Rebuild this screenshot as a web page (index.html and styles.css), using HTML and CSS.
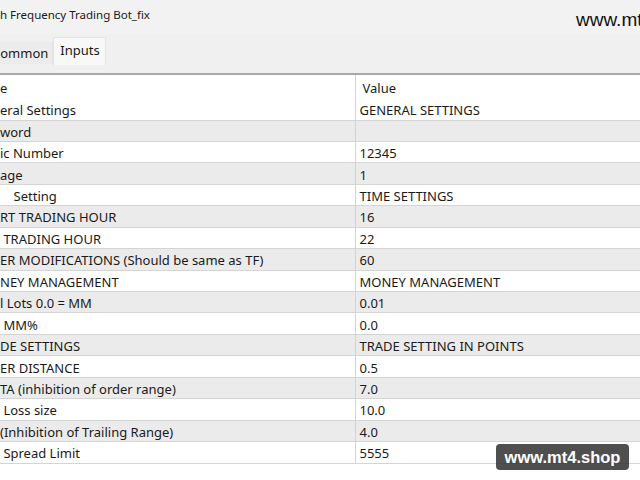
FILE: index.html
```html
<!DOCTYPE html>
<html lang="en">
<head>
    <meta charset="UTF-8">
    <meta name="viewport" content="width=device-width, initial-scale=1.0">
    <title>Inputs</title>
    <link rel="stylesheet" href="styles.css">
</head>
<body>

<div class="window">
    <div class="titlebar">
        <span class="title">h Frequency Trading Bot_fix</span>
        <span class="site">www.mt4.shop</span>
    </div>

    <div class="tabs">
        <div class="tab">Common</div>
        <div class="tab active">Inputs</div>
    </div>

    <table class="inputs">
        <thead>
            <tr><th>e</th><th>Value</th></tr>
        </thead>
        <tbody>
            <tr class="plain"><td>eral Settings</td><td>GENERAL SETTINGS</td></tr>
            <tr><td>word</td><td></td></tr>
            <tr><td>ic Number</td><td>12345</td></tr>
            <tr><td>age</td><td>1</td></tr>
            <tr><td>    Setting</td><td>TIME SETTINGS</td></tr>
            <tr><td>RT TRADING HOUR</td><td>16</td></tr>
            <tr><td> TRADING HOUR</td><td>22</td></tr>
            <tr><td>ER MODIFICATIONS (Should be same as TF)</td><td>60</td></tr>
            <tr><td>NEY MANAGEMENT</td><td>MONEY MANAGEMENT</td></tr>
            <tr><td>l Lots 0.0 = MM</td><td>0.01</td></tr>
            <tr><td> MM%</td><td>0.0</td></tr>
            <tr><td>DE SETTINGS</td><td>TRADE SETTING IN POINTS</td></tr>
            <tr><td>ER DISTANCE</td><td>0.5</td></tr>
            <tr><td>TA (inhibition of order range)</td><td>7.0</td></tr>
            <tr><td> Loss size</td><td>10.0</td></tr>
            <tr><td>(Inhibition of Trailing Range)</td><td>4.0</td></tr>
            <tr><td> Spread Limit</td><td>5555</td></tr>
        </tbody>
    </table>
</div>

<div class="badge">www.mt4.shop</div>

</body>
</html>
```

FILE: styles.css
```css
body {
  margin: 0;
  background-color: white;
  font-family: "Noto Sans", "Open Sans", sans-serif;
  color: #1a1a1a;
  overflow: hidden;
}

.window {
  width: 640px;
  height: 480px;
  background-color: white;
}

.titlebar {
  display: grid;
  grid-template-columns: 576px 1fr;
  height: 34px;
  background-color: #f2f2f2;
  overflow: hidden;
}

.title {
  font-size: 11.5px;
  padding-top: 7px;
  white-space: nowrap;
}

.site {
  font-family: "Liberation Sans", Arial, sans-serif;
  font-size: 19px;
  color: #111;
  padding-top: 9px;
  white-space: nowrap;
}

.tabs {
  display: flex;
  align-items: flex-end;
  height: 41px;
  background-color: #f0f0f0;
  border-bottom: 2px solid #a8a8a8;
  box-sizing: border-box;
  overflow: hidden;
}

.tab {
  font-size: 13px;
  height: 22px;
  line-height: 22px;
  margin-bottom: 9px;
  padding: 0 4px 0 0;
  margin-left: -8px;
  background-color: #ececec;
  border-right: 1px solid #e2e2e2;
}

.tab.active {
  margin-left: 0;
  height: 27px;
  line-height: 25px;
  padding: 0 5px 0 6px;
  margin-bottom: 8px;
  background-color: #f8f8f8;
  border: 1px solid #e4e4e4;
  border-bottom: 0;
}

.inputs {
  width: 100%;
  border-collapse: collapse;
  font-size: 13px;
}

.inputs th {
  font-weight: normal;
  text-align: left;
  height: 23px;
  padding: 3px 0 0 0;
  box-sizing: border-box;
}

.inputs td {
  height: 21.44px;
  padding: 2px 0 0 0;
  box-sizing: border-box;
  border-bottom: 1px solid #d4d4d4;
  white-space: pre;
}

.inputs th:first-child,
.inputs td:first-child {
  width: 355px;
  border-right: 1px solid #d4d4d4;
}

.inputs th:last-child {
  padding-left: 7px;
}

.inputs td:last-child {
  padding-left: 4px;
}

.inputs tbody tr:nth-child(even) {
  background-color: #ebebeb;
}

.inputs tr.plain td {
  height: 22px;
}

.badge {
  position: absolute;
  left: 496px;
  top: 444px;
  width: 133px;
  height: 26px;
  line-height: 26px;
  text-align: center;
  border-radius: 4px;
  background-color: rgba(55, 55, 55, 0.88);
  color: white;
  font-family: "Liberation Sans", Arial, sans-serif;
  font-weight: bold;
  font-size: 16.5px;
}
```
